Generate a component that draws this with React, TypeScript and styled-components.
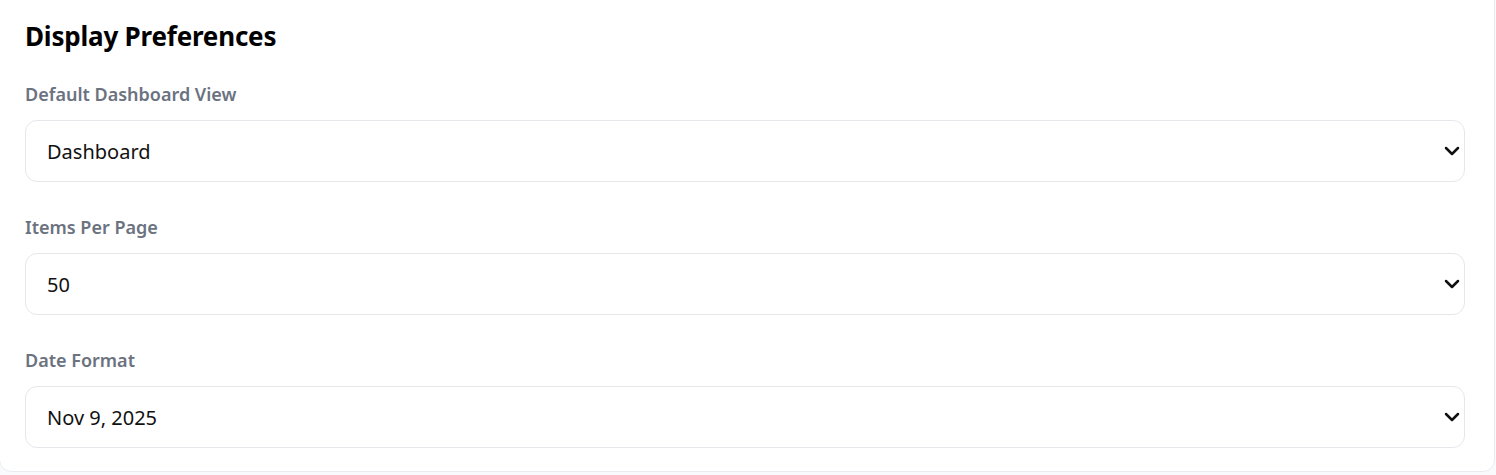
import React, { useState } from "react";
import styled, { createGlobalStyle } from "styled-components";
import { ChevronDown } from "lucide-react";

const GlobalStyle = createGlobalStyle`
  html, body {
    margin: 0;
    padding: 0;
    background: #f9fafb;
    font-family: "Noto Sans", "Open Sans", Arial, sans-serif;
    overflow: hidden;
  }
`;

const Card = styled.section`
  box-sizing: border-box;
  width: 1496px;
  margin: -13px 0 0 -1px;
  padding: 32px 29px 23px 25px;
  background: #ffffff;
  border: 1px solid #e9eaee;
  border-radius: 12px;
  display: flex;
  flex-direction: column;
`;

const Title = styled.h2`
  margin: 0 0 28px;
  font-size: 26px;
  line-height: 32px;
  font-weight: 700;
  color: #000000;
  letter-spacing: -0.2px;
`;

const Field = styled.div`
  display: flex;
  flex-direction: column;
  gap: 12px;
  & + & {
    margin-top: 31px;
  }
`;

const Label = styled.label`
  font-size: 18px;
  line-height: 28px;
  font-weight: 600;
  color: #6b7280;
`;

const SelectWrap = styled.div`
  position: relative;
  height: 62px;
`;

const Select = styled.select`
  box-sizing: border-box;
  width: 100%;
  height: 100%;
  appearance: none;
  -webkit-appearance: none;
  padding: 0 48px 0 21px;
  font-family: inherit;
  font-size: 20px;
  color: #111111;
  background: #ffffff;
  border: 1px solid #e5e7eb;
  border-radius: 12px;
  outline: none;
`;

const Chevron = styled(ChevronDown)`
  position: absolute;
  right: 1px;
  top: 50%;
  transform: translateY(-50%);
  pointer-events: none;
  color: #111111;
`;

type Pref = { id: string; label: string; options: string[]; value: string };

const prefs: Pref[] = [
  {
    id: "view",
    label: "Default Dashboard View",
    options: ["Dashboard", "Analytics", "Reports"],
    value: "Dashboard",
  },
  { id: "perPage", label: "Items Per Page", options: ["10", "25", "50", "100"], value: "50" },
  {
    id: "date",
    label: "Date Format",
    options: ["Nov 9, 2025", "11/09/2025", "09/11/2025", "2025-11-09"],
    value: "Nov 9, 2025",
  },
];

export default function App() {
  const [values, setValues] = useState<Record<string, string>>(
    Object.fromEntries(prefs.map((p) => [p.id, p.value]))
  );

  return (
    <>
      <GlobalStyle />
      <Card>
        <Title>Display Preferences</Title>
        {prefs.map((p) => (
          <Field key={p.id}>
            <Label htmlFor={p.id}>{p.label}</Label>
            <SelectWrap>
              <Select
                id={p.id}
                value={values[p.id]}
                onChange={(e) => setValues({ ...values, [p.id]: e.target.value })}
              >
                {p.options.map((o) => (
                  <option key={o}>{o}</option>
                ))}
              </Select>
              <Chevron size={24} strokeWidth={2.5} />
            </SelectWrap>
          </Field>
        ))}
      </Card>
    </>
  );
}
